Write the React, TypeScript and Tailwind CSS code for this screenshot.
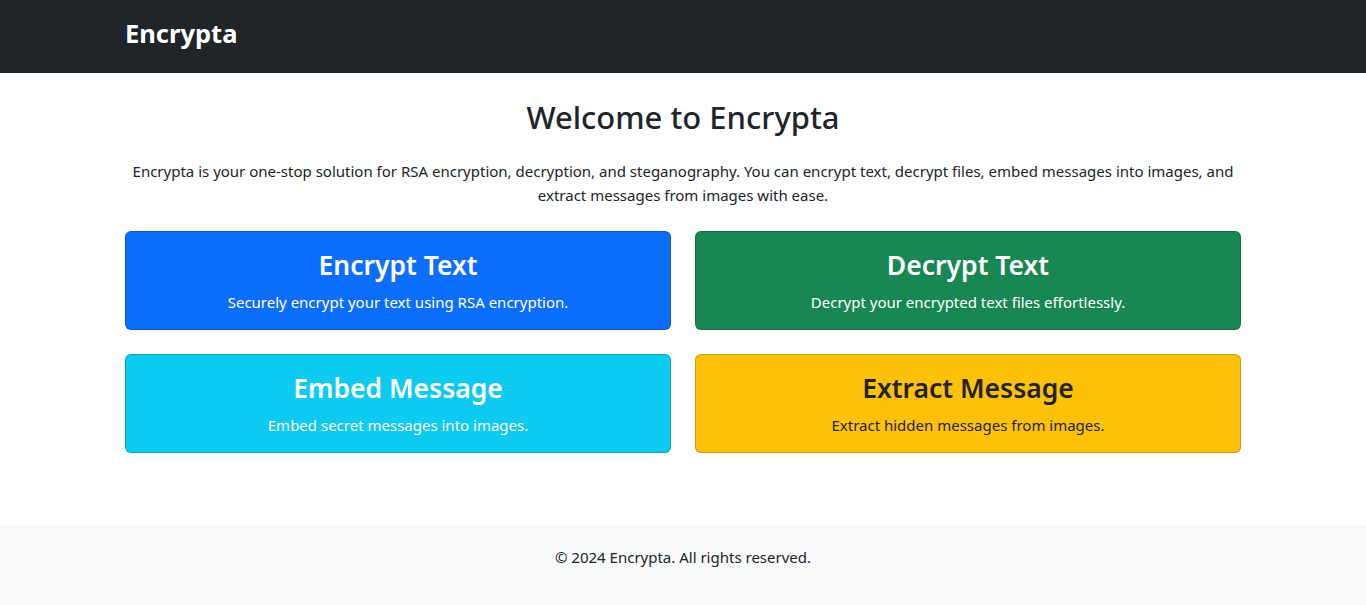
const features = [
  {
    title: "Encrypt Text",
    text: "Securely encrypt your text using RSA encryption.",
    cls: "bg-[#0d6efd] text-white",
  },
  {
    title: "Decrypt Text",
    text: "Decrypt your encrypted text files effortlessly.",
    cls: "bg-[#198754] text-white",
  },
  {
    title: "Embed Message",
    text: "Embed secret messages into images.",
    cls: "bg-[#0dcaf0] text-white",
  },
  {
    title: "Extract Message",
    text: "Extract hidden messages from images.",
    cls: "bg-[#ffc107] text-[#212529]",
  },
];

const App = () => {
  return (
    <div className="min-h-screen bg-white text-[#212529] font-['Noto_Sans',sans-serif] flex flex-col">
      {/* Navbar */}
      <nav className="h-[73px] bg-[#212529]">
        <div className="mx-auto w-[1140px] px-3 h-full flex items-center pb-[6px]">
          <span className="text-[25.5px] font-bold text-white leading-none">Encrypta</span>
        </div>
      </nav>

      {/* Main */}
      <main className="mx-auto w-[1140px] px-3 pt-[26px]">
        <h2 className="text-center text-[31px] font-medium leading-[1.2] mb-[23px]">
          Welcome to Encrypta
        </h2>
        <p className="text-center text-[15px] leading-6 mb-6">
          Encrypta is your one-stop solution for RSA encryption, decryption, and steganography. You can encrypt text,
          decrypt files, embed messages into images, and extract messages from images with ease.
        </p>

        <div className="grid grid-cols-2 gap-x-6 gap-y-6">
          {features.map((f) => (
            <div
              key={f.title}
              className={`rounded-[6px] border border-black/20 pt-[18px] pb-[15px] px-4 text-center ${f.cls}`}
            >
              <h3 className="text-[26.5px] font-semibold leading-[1.2] mb-2">{f.title}</h3>
              <p className="text-[15px] leading-6">{f.text}</p>
            </div>
          ))}
        </div>
      </main>

      {/* Footer */}
      <footer className="mt-[72px] bg-[#f8f9fa] pt-5 pb-10 text-center text-[15px] leading-6">
        © 2024 Encrypta. All rights reserved.
      </footer>
    </div>
  );
};

export default App;
